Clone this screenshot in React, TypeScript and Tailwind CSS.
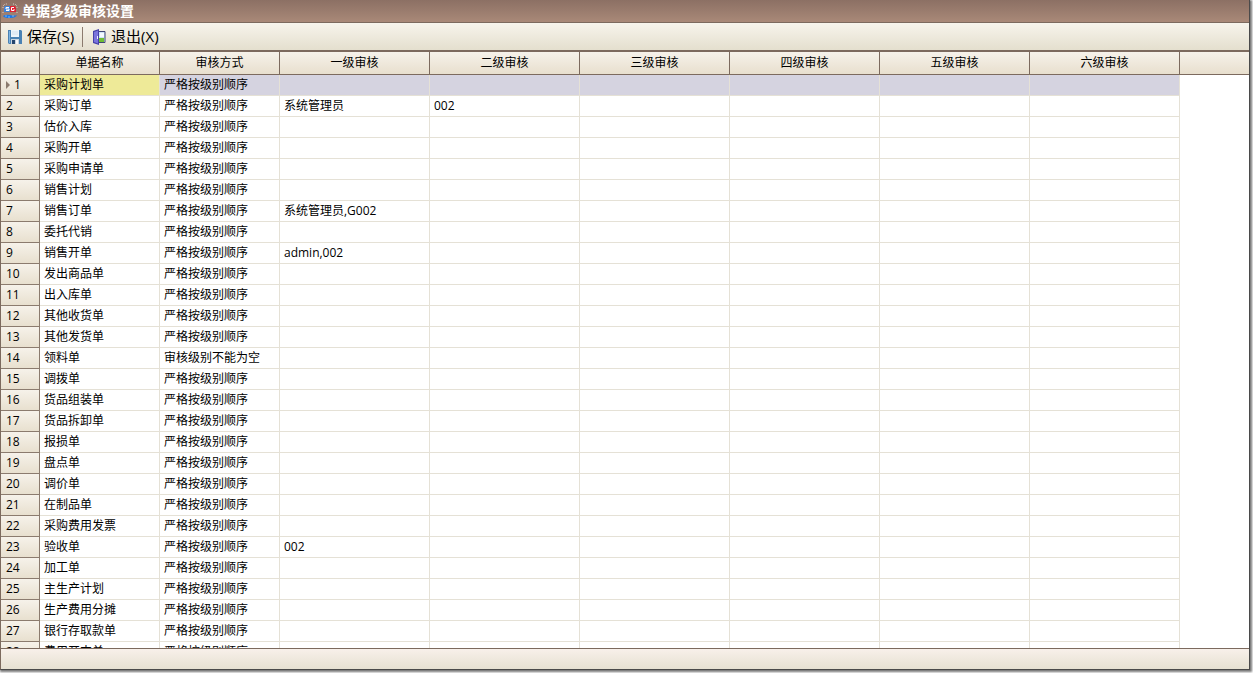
interface AuditRow {
    name: string
    mode?: string
    levels?: string[]
}

const DEFAULT_MODE = '严格按级别顺序'

const levelTitles = ['一级审核', '二级审核', '三级审核', '四级审核', '五级审核', '六级审核']

const rows: AuditRow[] = [
    { name: '采购计划单' },
    { name: '采购订单', levels: ['系统管理员', '002'] },
    { name: '估价入库' },
    { name: '采购开单' },
    { name: '采购申请单' },
    { name: '销售计划' },
    { name: '销售订单', levels: ['系统管理员,G002'] },
    { name: '委托代销' },
    { name: '销售开单', levels: ['admin,002'] },
    { name: '发出商品单' },
    { name: '出入库单' },
    { name: '其他收货单' },
    { name: '其他发货单' },
    { name: '领料单', mode: '审核级别不能为空' },
    { name: '调拨单' },
    { name: '货品组装单' },
    { name: '货品拆卸单' },
    { name: '报损单' },
    { name: '盘点单' },
    { name: '调价单' },
    { name: '在制品单' },
    { name: '采购费用发票' },
    { name: '验收单', levels: ['002'] },
    { name: '加工单' },
    { name: '主生产计划' },
    { name: '生产费用分摊' },
    { name: '银行存取款单' },
    { name: '费用开支单' }
]

function AppIcon() {
    return (
        <svg className="w-4 h-4 shrink-0" viewBox="0 0 16 16" aria-hidden="true">
            <path d="M1 5V3l2-2h2M11 1h2l2 2v2M1 9v2M15 9v2" fill="none" stroke="#d8ccc5" strokeDasharray="1 1" />
            <path d="M3 3h5v6H2V5z" fill="#3b82dc" />
            <path d="M8 3h5l1 2v4H8z" fill="#e02030" />
            <path d="M7 4.500H4v1.500h3v1.500H4" fill="none" stroke="#fff" />
            <path d="M12 4.500H9.500v3H12V6" fill="none" stroke="#fff" />
            <path d="M1 13q3-2 7-1t7 0q-1 3-7 3t-7-2z" fill="#1a78e6" />
            <path d="M3 13h2M6 14h2M10 13h2" stroke="#a9ccf6" strokeWidth=".7" />
        </svg>
    )
}

function SaveIcon() {
    return (
        <svg className="w-4 h-4 shrink-0" viewBox="0 0 16 16" aria-hidden="true">
            <path d="M1 1h13l1 1v13H2l-1-1z" fill="#4a82b4" />
            <path d="M2 2h1v12H2z" fill="#7db4e2" />
            <path d="M4 1h8v7H4z" fill="#eef5fb" />
            <path d="M5 3h6M5 5h6" stroke="#d3e1ee" />
            <path d="M4 10h8v5H4z" fill="#c9d5e0" />
            <path d="M5 11h3v4H5z" fill="#24466e" />
            <path d="M9 11h2v4H9z" fill="#f8fafc" />
        </svg>
    )
}

function ExitIcon() {
    return (
        <svg className="w-4 h-4 shrink-0" viewBox="0 0 16 16" aria-hidden="true">
            <path d="M7 2.500h7v11H7z" fill="#cfe4f6" stroke="#3f4676" />
            <path d="M8 9h5v4H8z" fill="#6fbe35" />
            <path d="M9 4h4v4H9z" fill="#f4faff" />
            <path d="M2 2l6-2v16l-6-2z" fill="#4540a8" />
            <path d="M3 3l4-1.500v13L3 13z" fill="#7a74dc" />
            <path d="M6 7h1v3H6z" fill="#f3edff" />
        </svg>
    )
}

function Toolbar() {
    return (
        <div className="flex items-center h-[27px] shrink-0 pl-1.5 text-[15px] bg-linear-to-b from-[#f7f4ec] to-[#e4dfce]">
            <button type="button" className="flex items-center gap-1">
                <SaveIcon />
                保存(S)
            </button>
            <div className="w-px h-5 mx-2 bg-[#8b7b6e]" />
            <button type="button" className="flex items-center gap-1">
                <ExitIcon />
                退出(X)
            </button>
        </div>
    )
}

function HeadCell({ children }: { children?: string }) {
    return (
        <th scope="col" className="h-[23px] p-0 font-normal text-center border-r border-b border-[#7c6a5e] bg-linear-to-b from-[#f6f2ea] to-[#e8dfce]">
            {children}
        </th>
    )
}

function Cell({ text, color }: { text?: string, color: string }) {
    return (
        <td className={`h-[21px] py-0 px-1 border-r border-b border-[#e5e1d6] ${color}`}>{text}</td>
    )
}

function AuditTable() {
    return (
        <table className="w-full table-fixed border-separate border-spacing-0 text-xs leading-5 whitespace-nowrap">
            <colgroup>
                <col className="w-[39px]" />
                <col className="w-[120px]" />
                <col className="w-[120px]" />
                {levelTitles.map((title) => <col key={title} className="w-[150px] last:w-[151px]" />)}
                <col />
            </colgroup>
            <thead>
                <tr>
                    <HeadCell />
                    <HeadCell>单据名称</HeadCell>
                    <HeadCell>审核方式</HeadCell>
                    {levelTitles.map((title) => <HeadCell key={title}>{title}</HeadCell>)}
                    <td className="border-b border-[#7c6a5e] bg-linear-to-b from-[#f6f2ea] to-[#e8dfce]" />
                </tr>
            </thead>
            <tbody>
                {rows.map((row, index) => {
                    const selected = index === 0
                    const color = selected ? 'bg-[#d5d3e0]' : 'bg-white'
                    return (
                        <tr key={row.name}>
                            <th scope="row" className="h-[21px] p-0 font-normal text-left border-r border-b border-[#8b7b6e] bg-linear-to-b from-[#f6f2ea] to-[#e8e0cf]">
                                <div className="flex items-center pl-[5px]">
                                    {selected && (
                                        <svg className="w-2 h-2" viewBox="0 0 8 8" aria-hidden="true">
                                            <path d="M0 0l4 4-4 4z" fill="#8b7b6e" />
                                        </svg>
                                    )}
                                    {index + 1}
                                </div>
                            </th>
                            <Cell text={row.name} color={selected ? 'bg-[#eeea98]' : color} />
                            <Cell text={row.mode || DEFAULT_MODE} color={color} />
                            {levelTitles.map((title, level) => (
                                <Cell key={title} text={row.levels?.[level]} color={color} />
                            ))}
                            <td />
                        </tr>
                    )
                })}
            </tbody>
        </table>
    )
}

function App() {
    return (
        <div className="h-screen bg-white pr-[3px] pb-[3px] overflow-hidden font-['Open_Sans','Noto_Sans_CJK_SC',sans-serif] text-black">
            <div className="h-full flex flex-col bg-white border-l border-l-[#7c6a5e] border-r border-b border-r-[#4a4a4a] border-b-[#4a4a4a] shadow-[1px_1px_2px_1px_#777777]">
                <header className="flex items-center gap-1 h-[23px] shrink-0 pl-px border-b border-[#7c6a5e] bg-linear-to-b from-[#8c7064] to-[#a98978]">
                    <AppIcon />
                    <h1 className="text-sm font-bold text-white">单据多级审核设置</h1>
                </header>
                <Toolbar />
                <main className="flex-1 min-h-0 overflow-hidden border-t-2 border-[#7c6a5e]">
                    <AuditTable />
                </main>
                <footer className="h-[21px] shrink-0 border-t border-[#7c6a5e] bg-linear-to-b from-[#f8f0ea] to-[#e6e1d2]" />
            </div>
        </div>
    )
}

export default App
